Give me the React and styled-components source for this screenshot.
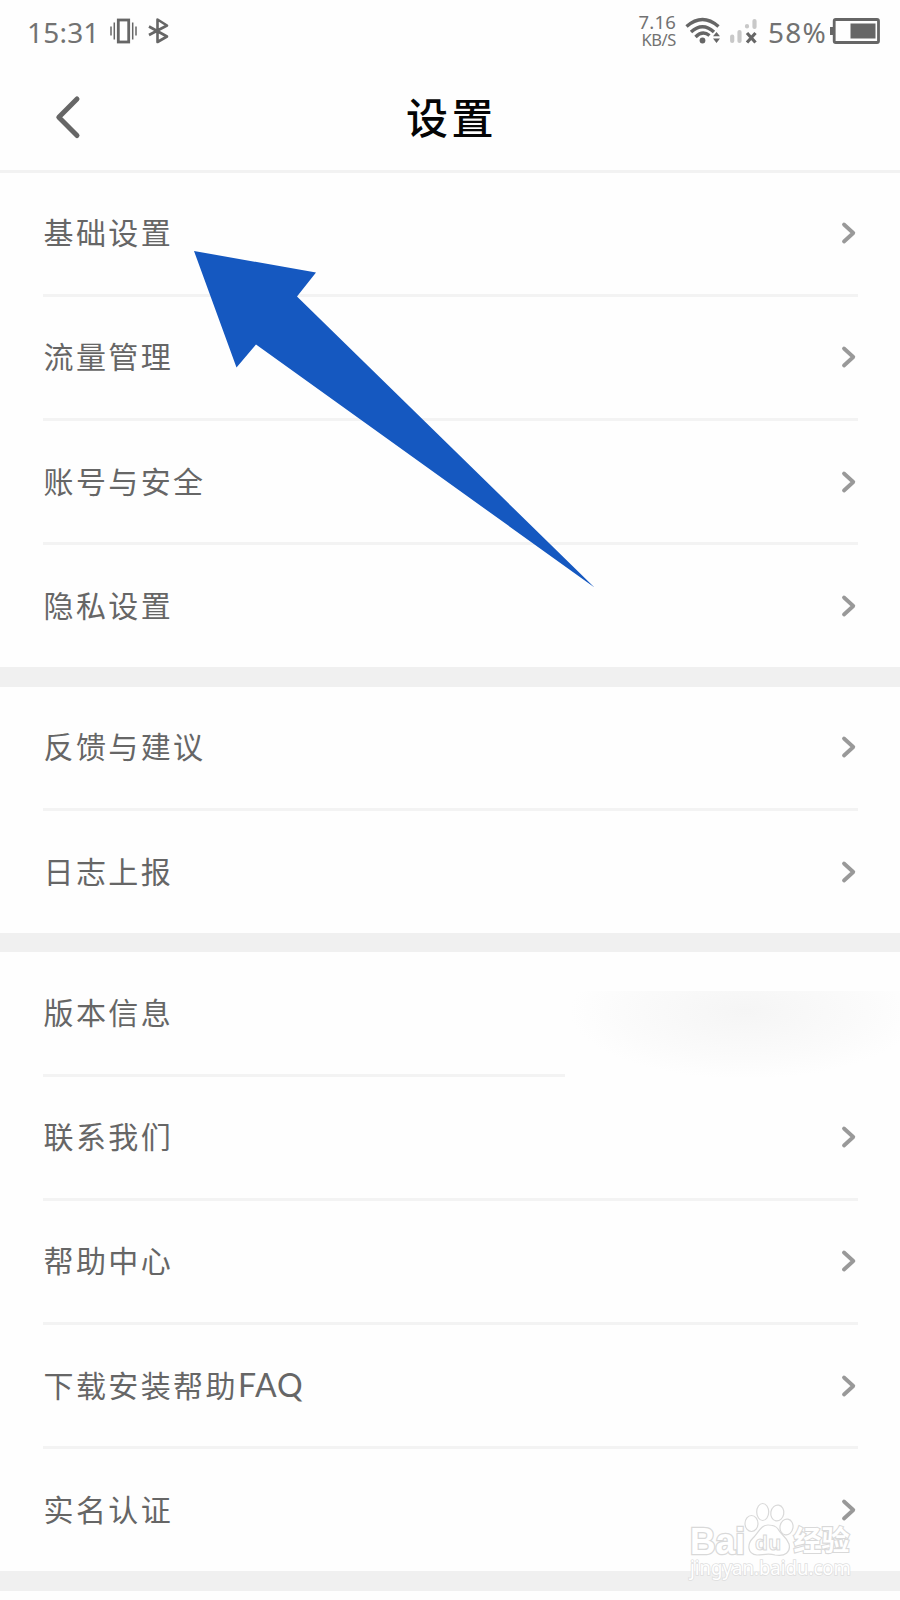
import React from "react";
import styled, { createGlobalStyle } from "styled-components";

const Global = createGlobalStyle`
  * { box-sizing: border-box; }
  body { margin: 0; background: #fefefe; }
`;

const latin = `"Noto Sans", "Open Sans", sans-serif`;

const Page = styled.main`
  position: relative;
  width: 900px;
  height: 1600px;
  overflow: hidden;
  background: #fefefe;
  color: #666;
  font-family: Lato, "Noto Sans CJK SC", sans-serif;
`;

const StatusBar = styled.div`
  height: 62px;
  padding: 0 20px 0 27px;
  display: flex;
  align-items: center;
  justify-content: space-between;
  font-family: ${latin};
  color: #727272;
`;

const StatusGroup = styled.div`
  display: flex;
  align-items: center;
`;

const Clock = styled.span`
  width: 83px;
  padding-top: 1px;
  font-size: 28px;
  line-height: 40px;
  letter-spacing: 0.2px;
  white-space: nowrap;
`;

const BatteryLevel = styled.span`
  width: 72px;
  padding: 1px 0 0 10px;
  font-size: 28px;
  line-height: 40px;
  letter-spacing: 1.2px;
  white-space: nowrap;
`;

const Speed = styled.div`
  margin-right: 9px;
  display: flex;
  flex-direction: column;
  align-items: flex-end;
  font-size: 18.5px;
  line-height: 17px;
  white-space: nowrap;
`;

const SpeedValue = styled.span`
  height: 17px;
  line-height: 15px;
  letter-spacing: 0.2px;
`;

const SpeedUnit = styled.span`
  font-size: 16.5px;
  letter-spacing: -0.4px;
`;

const Glyph = styled.svg`
  display: block;
  flex: none;
  margin-left: ${(p) => p.$left || 0}px;
  overflow: visible;
`;

const Header = styled.header`
  height: 110.7px;
  padding: 2px 56px 0;
  display: grid;
  grid-template-columns: 1fr auto 1fr;
  align-items: center;
  border-bottom: 3px solid #f2f2f2;
`;

const Title = styled.h1`
  margin: 2px 0 0;
  font-size: 42px;
  font-weight: 500;
  line-height: 60px;
  letter-spacing: 3.5px;
  text-indent: 3px;
  color: #050505;
`;

const Section = styled.section`
  display: flex;
  flex-direction: column;
`;

const Divider = styled.div`
  height: 19.7px;
  background: #f0f0f0;
`;

const Row = styled.div`
  position: relative;
  height: 124.2px;
  margin: 0 42.5px;
  padding: 0 1.5px 0 1px;
  display: flex;
  align-items: center;
  justify-content: space-between;
  border-bottom: 3px solid #f3f3f3;
  &:last-child { height: 121.8px; border-bottom: 0; }
`;

const Label = styled.span`
  font-size: 30px;
  line-height: 44px;
  letter-spacing: 2.4px;
  padding-bottom: 2px;
  white-space: nowrap;
`;

const Latin = styled.span`
  font-size: 32px;
  letter-spacing: 0.9px;
`;

const Smudge = styled.div`
  position: absolute;
  left: 522.5px;
  top: 39px;
  width: 335px;
  height: 87px;
  background: radial-gradient(ellipse 175px 68px at 180px 20px, #f5f5f5 0%, #f8f8f8 35%, #fbfbfb 70%, #fefefe 100%) #fefefe;
`;

const Pointer = styled.svg`
  position: absolute;
  left: 190px;
  top: 248px;
`;

const Watermark = styled.svg`
  position: absolute;
  left: 680px;
  top: 1496px;
`;

const Chevron = () => (
  <Glyph width="15" height="22" viewBox="0 0 15 22" fill="none" stroke="#999" strokeWidth="3.8" strokeLinecap="round" strokeLinejoin="round">
    <path d="M3 2.500 12.300 11 3 19.500" />
  </Glyph>
);

const Item = ({ label, suffix, hidden }) => (
  <Row>
    <Label>{label}{suffix && <Latin>{suffix}</Latin>}</Label>
    {hidden ? <Smudge /> : <Chevron />}
  </Row>
);

export default function App() {
  return (
    <Page>
      <Global />
      <StatusBar>
        <StatusGroup>
          <Clock>15:31</Clock>
          <Glyph width="27" height="26" viewBox="0 0 27 26" fill="none" stroke="#666">
            <rect x="8.3" y="2" width="10.4" height="22" strokeWidth="2.8" />
            <path d="M4.3 4.5v17M22.7 4.5v17M1 8.5v9M26 8.5v9" strokeWidth="1.5" />
          </Glyph>
          <Glyph $left={11} width="22" height="26" viewBox="0 0 22 26" fill="none" stroke="#666" strokeWidth="2.6" strokeLinejoin="round">
            <path d="M1 8.5 19 18.5 9.5 24V1.500L19 7.500 1 17" />
          </Glyph>
        </StatusGroup>
        <StatusGroup>
          <Speed>
            <SpeedValue>7.16</SpeedValue>
            <SpeedUnit>KB/S</SpeedUnit>
          </Speed>
          <Glyph width="36" height="28" viewBox="0 0 36 28" fill="none" stroke="#666" strokeWidth="3.4">
            <path d="M1.500 9.500Q17.500-4.500 33.500 9.500M6 15Q17.500 4.500 29 15M10.500 20Q17.500 13 24.500 18.500" />
            <circle cx="17.500" cy="23.500" r="2.900" fill="#666" stroke="none" />
            <path d="M28 19.300 31.500 15 35 19.300ZM28 21.500 31.500 26 35 21.500Z" fill="#666" stroke="none" />
          </Glyph>
          <Glyph $left={9} width="28" height="28" viewBox="0 0 28 28" fill="none">
            <path d="M2.200 19.500V24M9.500 15V24M17 9V9.500M24.500 4V10" stroke="#c8c8c8" strokeWidth="4.200" strokeLinecap="round" />
            <path d="M17 16 25.500 25.500M25.500 16 17 25.500" stroke="#666" strokeWidth="3.200" />
          </Glyph>
          <BatteryLevel>58%</BatteryLevel>
          <Glyph width="50" height="26" viewBox="0 0 50 26">
            <rect x="4.200" y="1.500" width="44.300" height="23" rx="1.500" fill="none" stroke="#666" strokeWidth="2.800" />
            <path d="M0 9H4V17H0Z" fill="#666" />
            <rect x="20.500" y="5.500" width="25" height="15" fill="#666" />
          </Glyph>
        </StatusGroup>
      </StatusBar>
      <Header>
        <Glyph width="24" height="42" viewBox="0 0 24 42" fill="none" stroke="#666" strokeWidth="5" strokeLinecap="round" strokeLinejoin="round">
          <path d="M21 3 2.800 21.300 21 39.500" />
        </Glyph>
        <Title>设置</Title>
      </Header>
      <Section>
        <Item label="基础设置" />
        <Item label="流量管理" />
        <Item label="账号与安全" />
        <Item label="隐私设置" />
      </Section>
      <Divider />
      <Section>
        <Item label="反馈与建议" />
        <Item label="日志上报" />
      </Section>
      <Divider />
      <Section>
        <Item label="版本信息" hidden />
        <Item label="联系我们" />
        <Item label="帮助中心" />
        <Item label="下载安装帮助" suffix="FAQ" />
        <Item label="实名认证" />
      </Section>
      <Divider />
      <Pointer width="406" height="342" viewBox="190 248 406 342">
        <path d="M194 251 316 272.500 297 296.500 594.500 587.500 256 344.500 236.500 367.500Z" fill="#1558c0" />
      </Pointer>
      <Watermark width="190" height="90" viewBox="680 1496 190 90" fill="#fff" stroke="#d9d9d9" strokeWidth="1.200" fontFamily='"Liberation Sans", "Noto Sans CJK SC", sans-serif' fontWeight="700">
        <ellipse cx="751.500" cy="1523.500" rx="6.500" ry="8" />
        <ellipse cx="762.700" cy="1512" rx="6" ry="8.500" />
        <ellipse cx="777.300" cy="1513" rx="6.500" ry="8" transform="rotate(10 777.300 1513)" />
        <ellipse cx="786.500" cy="1527" rx="6.500" ry="8" transform="rotate(10 786.500 1527)" />
        <path d="M768 1525C761 1525 758 1533 753 1538C747 1544 747 1554 757 1555C763 1555 768 1553 775 1555C785 1557 791 1552 789 1544C786 1536 781 1535 778 1529C776 1526 772 1525 768 1525Z" />
        <text x="690" y="1553.500" fontSize="37" strokeWidth="2.600" paintOrder="stroke" textLength="55" lengthAdjust="spacingAndGlyphs">Bai</text>
        <text x="755" y="1549.500" fontSize="21" strokeWidth="1" textLength="26">du</text>
        <text x="793.500" y="1551" fontSize="28" strokeWidth="2.200" paintOrder="stroke" textLength="56">经验</text>
        <text x="690" y="1575" fontSize="19.500" fontWeight="400" fontFamily={latin} stroke="#dedede" strokeWidth="1.600" paintOrder="stroke" textLength="161" lengthAdjust="spacingAndGlyphs">jingyan.baidu.com</text>
      </Watermark>
    </Page>
  );
}
